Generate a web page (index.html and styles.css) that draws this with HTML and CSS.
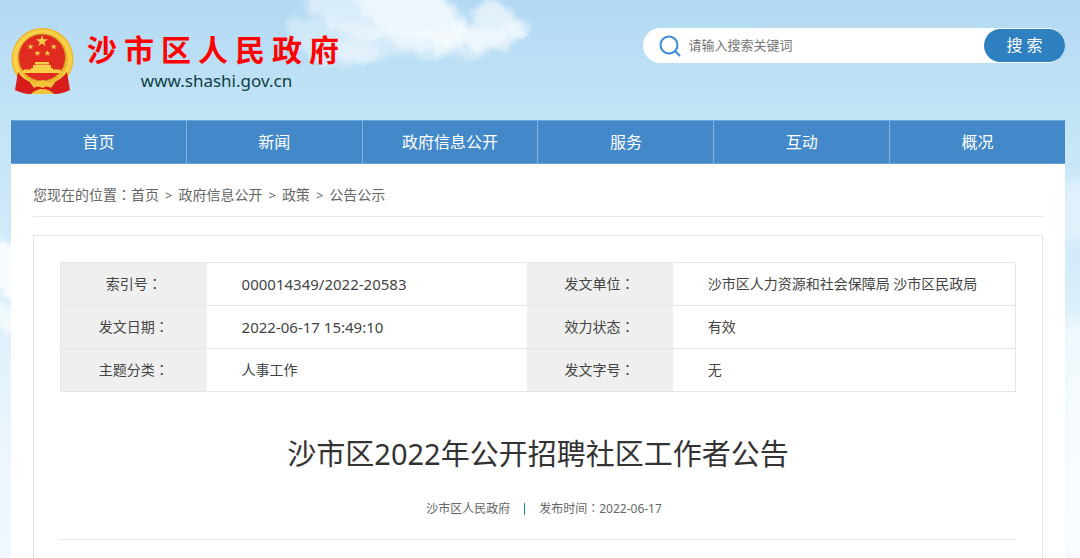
FILE: index.html
```html
<!DOCTYPE html>
<html lang="zh-CN">
<head>
<meta charset="utf-8">
<title>沙市区2022年公开招聘社区工作者公告</title>
<link rel="stylesheet" href="styles.css">
</head>
<body>
<svg class="sky" width="1080" height="558" viewBox="0 0 1080 558" aria-hidden="true">
  <defs>
    <filter id="puff" x="-10%" y="-20%" width="120%" height="140%">
      <feTurbulence type="fractalNoise" baseFrequency="0.06" numOctaves="5" seed="3" result="n"/>
      <feGaussianBlur in="SourceGraphic" stdDeviation="2.500" result="b"/>
      <feDisplacementMap in="b" in2="n" scale="16" xChannelSelector="R" yChannelSelector="G"/>
      <feGaussianBlur stdDeviation="1"/>
    </filter>
    <filter id="mist" x="-50%" y="-50%" width="200%" height="200%"><feGaussianBlur stdDeviation="7"/></filter>
  </defs>
  <g filter="url(#puff)" fill="#fff">
    <path opacity=".35" d="M286 26 Q296 14 316 18 L400 30 L526 26 Q514 50 484 56 Q440 60 405 54 Q390 58 372 62 Q350 70 325 64 Q300 56 286 26Z"/>
    <path opacity=".5" d="M302 6 Q306 -12 330 -14 L436 -14 Q448 0 462 16 Q474 26 468 44 Q454 58 434 50 Q404 52 384 42 Q360 38 340 32 Q320 16 302 6Z"/>
    <path opacity=".5" d="M350 -14 H436 Q446 4 460 18 Q468 30 458 40 Q444 50 424 40 Q396 38 376 24 Q356 10 350 -14Z"/>
    <path opacity=".6" d="M468 10 Q476 2 492 3 Q508 4 512 16 Q524 22 527 30 Q518 42 504 42 Q490 54 474 48 Q462 42 464 28 Q478 22 468 10Z"/>
    <path opacity=".35" d="M330 46 Q344 34 362 40 Q376 46 380 54 Q362 66 342 64 Q326 56 330 46Z"/>
  </g>
  <g filter="url(#puff)" fill="#fff">
    <path opacity=".8" d="M-14 242 Q0 234 18 244 V300 Q4 296 -14 270Z"/>
    <path opacity=".6" d="M-14 304 Q2 296 18 312 V332 Q0 330 -14 320Z"/>
  </g>
  <g filter="url(#mist)" fill="#fff">
    <path opacity=".4" d="M1062 180 H1090 V240 H1062Z"/>
    <path opacity=".6" d="M1062 320 H1090 V558 H1062Z"/>
  </g>
</svg>
<div class="page">
  <header class="header">
    <a class="brand" href="#">
      <svg class="emblem" width="64" height="67" viewBox="0 0 64 67" aria-hidden="true">
        <circle cx="31.500" cy="31" r="31" fill="#efb92c"/>
        <circle cx="31.500" cy="31" r="27.500" fill="none" stroke="#fbd04a" stroke-width="4"/>
        <circle cx="31" cy="29.500" r="23.500" fill="#e22b20" stroke="#cf9a2a"/>
        <g fill="#f8cf46">
          <path id="star" d="M31 7 L32.500 11.200 H37 L33.400 13.900 L34.700 18.200 L31 15.600 L27.300 18.200 L28.600 13.900 L25 11.200 H29.500Z"/>
          <use href="#star" transform="translate(3.500 12) scale(.52)"/>
          <use href="#star" transform="translate(26.600 12) scale(.52)"/>
          <use href="#star" transform="translate(10.300 18.500) scale(.52)"/>
          <use href="#star" transform="translate(20.300 18.500) scale(.52)"/>
          <path d="M24 34 H38 V36.500 H24Z M22 37 H40 V40 H22Z M20 40 H42 V45 H20Z M13 41.500 H49 L51 44 V45 H11 V44Z"/>
        </g>
        <path d="M7 44 Q12 52 22 55 L19 66 Q12 66 4 62Z M56 44 Q50 52 41 55 L44 66 Q51 66 59 62Z" fill="#d61d1b"/>
        <path d="M19 54 H44 V66 H19Z" fill="#d61d1b"/>
        <path d="M18 53 Q26 56 31.500 52 Q37 56 45 53 L40 60 Q36 57 31.500 60 Q27 57 23 60Z M20 66 Q25 61 31.500 61 Q38 61 43 66Z" fill="#f4c53c"/>
      </svg>
      <span class="brand-text">
        <span class="brand-name">沙市区人民政府</span>
        <span class="brand-url">www.shashi.gov.cn</span>
      </span>
    </a>
    <form class="search" role="search">
      <svg class="search-icon" width="22" height="22" viewBox="0 0 22 22" fill="none" stroke="#3a8ae0" stroke-width="2" aria-hidden="true">
        <circle cx="10" cy="10" r="8.500"/><path d="M16 16 L21 21"/>
      </svg>
      <input class="search-input" type="text" placeholder="请输入搜索关键词" aria-label="请输入搜索关键词">
      <button class="search-button" type="button">搜 索</button>
    </form>
  </header>
  <nav class="nav">
    <a href="#">首页</a>
    <a href="#">新闻</a>
    <a href="#">政府信息公开</a>
    <a href="#">服务</a>
    <a href="#">互动</a>
    <a href="#">概况</a>
  </nav>
  <main class="main">
    <div class="crumbs">
      <span>您现在的位置<span class="colon" lang="zh-Hant">：</span><a href="#">首页</a></span>
      <span class="sep">&gt;</span>
      <a href="#">政府信息公开</a>
      <span class="sep">&gt;</span>
      <a href="#">政策</a>
      <span class="sep">&gt;</span>
      <a href="#">公告公示</a>
    </div>
    <article class="article">
      <table class="info">
        <colgroup><col class="col-label"><col class="col-value"><col class="col-label"><col></colgroup>
        <tr><th scope="row">索引号<span class="colon" lang="zh-Hant">：</span></th><td class="number">000014349/2022-20583</td><th scope="row">发文单位<span class="colon" lang="zh-Hant">：</span></th><td>沙市区人力资源和社会保障局 沙市区民政局</td></tr>
        <tr><th scope="row">发文日期<span class="colon" lang="zh-Hant">：</span></th><td class="number">2022-06-17 15:49:10</td><th scope="row">效力状态<span class="colon" lang="zh-Hant">：</span></th><td>有效</td></tr>
        <tr><th scope="row">主题分类<span class="colon" lang="zh-Hant">：</span></th><td>人事工作</td><th scope="row">发文字号<span class="colon" lang="zh-Hant">：</span></th><td>无</td></tr>
      </table>
      <h1 class="title">沙市区2022年公开招聘社区工作者公告</h1>
      <div class="meta">
        <span>沙市区人民政府</span>
        <span class="bar"></span>
        <span>发布时间<span class="colon" lang="zh-Hant">：</span>2022-06-17</span>
      </div>
    </article>
  </main>
</div>
</body>
</html>
```

FILE: styles.css
```css
* {
  box-sizing: border-box;
}

body {
  margin: 0;
  min-height: 100vh;
  background: linear-gradient(#b2d9f3 0, #c2e3f6 110px, #d0eaf9 230px, #e3f3fc 370px, #eff6fe 480px, #f0f7fe 558px);
  color: #444;
  font: 14px/20px "Noto Sans", "Noto Sans CJK SC", sans-serif;
}

a {
  color: inherit;
  text-decoration: none;
}

.colon {
  font-family: "Noto Sans CJK TC", sans-serif;
  line-height: 1;
}

.sky {
  position: absolute;
  top: 0;
  left: 0;
  z-index: -1;
}

.page {
  display: flex;
  flex-direction: column;
  min-height: 100vh;
  padding: 0 15px 0 11px;
}

.header {
  display: flex;
  justify-content: space-between;
  align-items: flex-start;
  padding: 28px 0 25px;
}

.brand {
  display: flex;
  gap: 12px;
}

.brand-text {
  display: flex;
  flex-direction: column;
  align-items: center;
  padding-top: 2px;
}

.brand-name {
  color: #f00;
  font-size: 30px;
  font-weight: 700;
  line-height: 40px;
  letter-spacing: 7px;
}

.brand-url {
  color: #0e4146;
  font-size: 17px;
  line-height: 22px;
}

.search {
  display: flex;
  align-items: center;
  width: 40%;
  height: 35px;
  padding-left: 16px;
  border-radius: 18px;
  background: #fff;
}

.search-icon {
  flex: none;
}

.search-input {
  flex: 1;
  min-width: 0;
  padding: 0 7px 2px;
  border: 0;
  outline: 0;
  background: none;
  font: 13px/20px "Noto Sans", "Noto Sans CJK SC", sans-serif;
}

.search-input::placeholder {
  color: #757575;
}

.search-button {
  width: 81px;
  height: 33px;
  padding: 0 0 2px;
  border: 0;
  border-radius: 17px;
  background: #2f80c0;
  color: #fff;
  font: 16px/24px "Noto Sans", "Noto Sans CJK SC", sans-serif;
}

.nav {
  display: flex;
  border: 1px solid #6ba7d8;
  border-width: 1px 0;
  background: #4389ca;
}

.nav a {
  flex: 1 1 0;
  color: #fff;
  font-size: 16px;
  line-height: 42px;
  text-align: center;
}

.nav a + a {
  border-left: 1px solid #7fb2de;
}

.main {
  display: flex;
  flex: 1;
  flex-direction: column;
  padding: 0 22px;
  background: #fff;
}

.crumbs {
  display: flex;
  gap: 6px;
  padding: 21px 0 11px;
  border-bottom: 1px solid #e8e8e8;
  color: #666;
}

.sep {
  font-size: 13px;
}

.article {
  flex: 1;
  margin-top: 18px;
  padding: 26px;
  border: 1px solid #e4e4e4;
  border-bottom: 0;
}

.info {
  width: 100%;
  border: 1px solid #e6e6e6;
  border-collapse: collapse;
  table-layout: fixed;
}

.info tr + tr {
  border-top: 1px solid #e6e6e6;
}

.info th,
.info td {
  height: 43px;
  padding: 0;
  font-weight: 400;
}

.info th {
  background: #efefef;
  text-align: center;
}

.info td {
  padding-left: 35px;
}

.info .number {
  font-size: 15px;
}

.col-label {
  width: 15.3%;
}

.col-value {
  width: 33.5%;
}

.title {
  margin: 42px 0 0;
  color: #333;
  font-size: 29px;
  font-weight: 400;
  line-height: 40px;
  text-align: center;
}

.meta {
  display: flex;
  justify-content: center;
  align-items: center;
  gap: 14px;
  padding: 25px 0 20px 12px;
  border-bottom: 1px dotted #ddd;
  color: #666;
  font-size: 12px;
}

.bar {
  width: 1px;
  height: 12px;
  background: #2a8a78;
}
```
